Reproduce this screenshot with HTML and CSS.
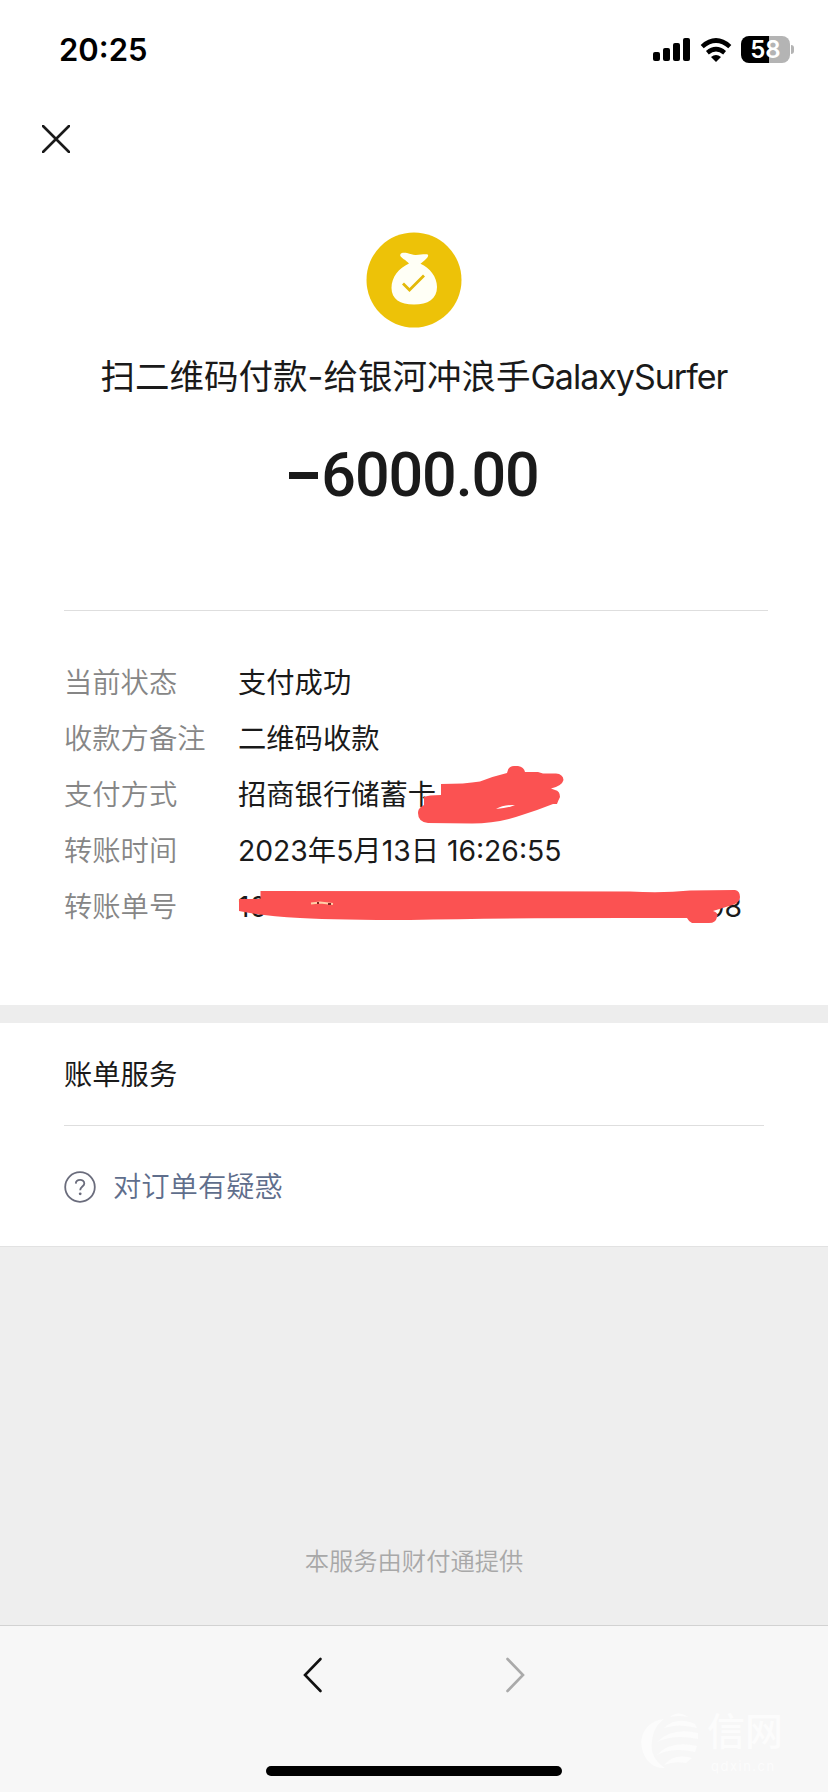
FILE: index.html
```html
<!DOCTYPE html>
<html lang="zh-CN">
<head>
    <meta charset="UTF-8">
    <title>账单详情</title>
    <link rel="stylesheet" href="styles.css">
</head>
<body>
<div class="page">
    <!--状态栏-->
    <div class="status">
        <span class="time">20:25</span>
        <div class="status_icons">
            <svg class="signal" width="38" height="24" viewBox="0 0 38 24">
                <rect x="0" y="14" width="7" height="9" rx="2"/>
                <rect x="10" y="10" width="7" height="13" rx="2"/>
                <rect x="20" y="5" width="7" height="18" rx="2"/>
                <rect x="30" y="0" width="7" height="23" rx="2"/>
            </svg>
            <svg class="wifi" width="32" height="24" viewBox="0 0 32 24">
                <path d="M2.2 8.6Q16-3.6 29.8 8.6" fill="none" stroke="#000" stroke-width="4.6"/>
                <path d="M7.4 14.7Q16 7.5 24.6 14.7" fill="none" stroke="#000" stroke-width="4.4"/>
                <path d="M11 19Q16 15.2 21 19L16 24Z"/>
            </svg>
            <div class="battery"><span>58</span></div>
            <i class="battery_cap"></i>
        </div>
    </div>
    <div class="nav">
        <svg width="28" height="28" viewBox="0 0 28 28">
            <path d="M1 1L27 27M27 1L1 27" stroke="#1a1a1a" stroke-width="2.6" stroke-linecap="round"/>
        </svg>
    </div>

    <!--收款信息-->
    <div class="summary">
        <svg class="logo" width="96" height="96" viewBox="0 0 96 96">
            <circle cx="48" cy="48" r="47.5" fill="#edc208"/>
            <path d="M43 31.5C40 28 35 26 34.2 23.5C34 20.5 38 20.5 41 21C45 21.8 47 23.3 50 23C54 22.7 58 22 61 22.3C63.5 23 61.5 26 59 28L54.5 31.8C64 36 71 45 71 55C71 67 62 72.5 48 72.5C34 72.5 25.5 67 25.5 56C25.5 45 33 36 43 31.5Z" fill="#fffff6"/>
            <path d="M37 51.5L43.5 58L58 43.5" fill="none" stroke="#e3b909" stroke-width="2.8"/>
        </svg>
        <div class="title">扫二维码付款-给银河冲浪手<span>GalaxySurfer</span></div>
        <div class="amount"><i class="minus"></i>6000.00</div>
    </div>

    <!--账单明细-->
    <div class="details">
        <div class="row"><span class="label">当前状态</span><span class="value">支付成功</span></div>
        <div class="row"><span class="label">收款方备注</span><span class="value">二维码收款</span></div>
        <div class="row">
            <span class="label">支付方式</span><span class="value">招商银行储蓄卡</span>
            <svg class="scribble card_mask" width="150" height="62" viewBox="416 764 150 62">
                <path d="M418 813Q418 809 421 807L424 805L424 797Q428 795 441 795L441 784Q465 784 480 781.5Q494 776 507 773Q508 766 514 766L518 766Q524 767 525 772L538 772L543 773.5L556 773.5Q563 774 563.5 780Q562 786 551 788.5L555 790Q560 791 560 797Q558 801 557 804L553 804Q538 810 522 815Q498 823.5 472 823.5L428 823Q418 822 418 813Z" fill="#fb5252"/>
                <path d="M496 809Q503 804.5 515 805Q508 808 496 809Z" fill="#fff"/>
            </svg>
        </div>
        <div class="row"><span class="label">转账时间</span><span class="value date">2023年5月13日 16:26:55</span></div>
        <div class="row">
            <span class="label">转账单号</span><span class="value number"><span>10</span><span>98</span></span>
            <svg class="scribble number_mask" width="504" height="36" viewBox="238 889 504 36">
                <path d="M239 899L260.5 899L260.5 891L630 891.5Q662 893.5 690 890.5L735 890Q740 891 740 897Q740 902 734 904.5L713 911Q719 913 717 917Q716 923 709 923L692 923Q689 922 687 918L620 918Q500 918 410 920Q340 920 300 918Q262 916 239 911Z" fill="#fb5252"/>
                <path d="M311 903.5L320 902.5L333 904" fill="none" stroke="#ffcfa8" stroke-width="2"/>
                <path d="M317 903H319M328 904H331" stroke="#7c2925" stroke-width="2"/>
            </svg>
        </div>
    </div>

    <!--账单服务-->
    <div class="service">
        <div class="service_title">账单服务</div>
        <div class="service_item">
            <svg width="32" height="32" viewBox="0 0 32 32">
                <circle cx="16" cy="16" r="14.8" fill="none" stroke="#6a6c7c" stroke-width="1.8"/>
                <path d="M11.8 12.6C12 7.7 20.3 7.7 20.3 12.4C20.3 15.4 16.2 15.7 16.2 19.2" fill="none" stroke="#6a6c7c" stroke-width="1.8"/>
                <circle cx="16.2" cy="22.8" r="1.4" fill="#6a6c7c"/>
            </svg>
            <span>对订单有疑惑</span>
        </div>
    </div>

    <div class="provider">本服务由财付通提供</div>

    <!--底部工具栏-->
    <div class="toolbar">
        <div class="arrows">
            <svg width="20" height="36" viewBox="0 0 20 36">
                <path d="M17.5 2L2 18L17.5 34" fill="none" stroke="#111" stroke-width="2.6" stroke-linecap="round"/>
            </svg>
            <svg width="20" height="36" viewBox="0 0 20 36">
                <path d="M2.5 2L18 18L2.5 34" fill="none" stroke="#aaa" stroke-width="2.6" stroke-linecap="round"/>
            </svg>
        </div>
        <div class="home_bar"></div>
        <div class="watermark">
            <svg width="60" height="58" viewBox="0 0 60 58">
                <path d="M24 7C6 9-1 24 2 37C5 50 15 57 25 56C16 50 10 42 12 29C13 19 17 12 24 7Z"/>
                <path d="M30 5Q38-2 48 5Q38 3 30 5ZM24 16Q36 4 55 12L57 16Q38 11 24 16ZM17 30Q32 15 58 21V27Q34 22 17 30ZM17 43Q30 28 57 34L55 40Q33 35 17 43ZM24 53Q34 41 52 46L46 51Q34 49 24 53Z"/>
            </svg>
            <div class="watermark_text"><b>信网</b><span>qdxin.cn</span></div>
        </div>
    </div>
</div>
</body>
</html>
```
FILE: styles.css
```css
*{
    margin: 0;
    padding: 0;
    box-sizing: border-box;
}
body{
    background: #eee;
    font-family: Inter, "Noto Sans CJK SC", sans-serif;
    color: #1a1a1a;
}
svg{
    display: block;
    flex: none;
}
.page{
    width: 828px;
    height: 1792px;
    display: flex;
    flex-direction: column;
    overflow: hidden;
}
/*状态栏*/
.status{
    height: 100px;
    padding: 0 34px 1px 59px;
    background: #fff;
    display: flex;
    justify-content: space-between;
    align-items: center;
    color: #000;
}
.time{
    font-size: 31px;
    font-weight: 600;
}
.status_icons{
    display: flex;
    align-items: center;
}
.signal{
    margin-right: 9px;
}
.wifi{
    margin-right: 9px;
}
.battery{
    width: 49px;
    height: 27px;
    border-radius: 8px;
    background: linear-gradient(90deg, #000 28px, #b4b4b4 28px);
    color: #fff;
    font-size: 24px;
    font-weight: 600;
    line-height: 27px;
    text-align: center;
}
.battery_cap{
    width: 3px;
    height: 9px;
    margin-left: 1px;
    border-radius: 0 4px 4px 0;
    background: #b4b4b4;
}
/*关闭按钮*/
.nav{
    height: 132px;
    padding: 25px 0 0 42px;
    background: #fff;
}
/*头像、标题、金额*/
.summary{
    height: 378px;
    background: #fff;
    display: flex;
    flex-direction: column;
    align-items: center;
}
.title{
    margin-top: 24px;
    font-size: 34.5px;
    line-height: 50px;
    white-space: nowrap;
}
.title span{
    font-size: 34px;
    letter-spacing: -1px;
}
.amount{
    margin-top: 38px;
    display: flex;
    align-items: center;
    font-family: Roboto, sans-serif;
    font-size: 61px;
    font-weight: 500;
    line-height: 70px;
    letter-spacing: -1.1px;
}
.minus{
    width: 29px;
    height: 7px;
    margin-right: 3px;
    background: #1a1a1a;
}
/*明细列表*/
.details{
    height: 395px;
    padding: 0 60px 0 64px;
    background: #fff;
    font-size: 28.3px;
}
.details::before{
    content: "";
    display: block;
    height: 1px;
    margin-bottom: 44px;
    background: #dedede;
}
.row{
    height: 56px;
    line-height: 56px;
    display: flex;
    position: relative;
    white-space: nowrap;
}
.label{
    width: 174px;
    color: #868686;
    font-weight: 350;
}
.number{
    width: 504px;
    display: flex;
    justify-content: space-between;
}
/*涂抹遮挡*/
.scribble{
    position: absolute;
}
.card_mask{
    left: 352px;
    top: -3px;
}
.number_mask{
    left: 174px;
    top: 10px;
}
/*账单服务*/
.service{
    height: 241px;
    padding: 0 64px;
    border-top: 18px solid #ededed;
    background: #fff;
    font-size: 28.3px;
}
.service_title{
    height: 103px;
    line-height: 104px;
    border-bottom: 1px solid #dedede;
}
.service_item{
    height: 120px;
    padding-top: 2px;
    display: flex;
    align-items: center;
    color: #5f6e8c;
    font-weight: 350;
}
.service_item span{
    margin-top: -5px;
    margin-left: 17px;
}
.provider{
    height: 379px;
    padding-top: 296px;
    border-top: 1px solid #e2e2e2;
    font-size: 24.3px;
    line-height: 36px;
    font-weight: 350;
    color: #a8a8a8;
    text-align: center;
}
/*底部工具栏*/
.toolbar{
    flex: 1;
    border-top: 1px solid #d2d2d2;
    background: #f7f7f7;
    position: relative;
}
.arrows{
    padding-top: 31px;
    display: flex;
    justify-content: center;
    gap: 182px;
}
.home_bar{
    width: 296px;
    height: 10px;
    margin: 73px auto 0;
    border-radius: 5px;
    background: #000;
}
/*水印*/
.watermark{
    position: absolute;
    left: 640px;
    top: 86px;
    display: flex;
    gap: 7px;
    color: #fcfcfc;
    fill: #fcfcfc;
}
.watermark_text{
    margin-top: -9px;
    display: flex;
    flex-direction: column;
}
.watermark_text b{
    font-size: 38px;
    line-height: 56px;
    font-weight: 500;
}
.watermark_text span{
    margin-left: 4px;
    font-size: 13px;
    line-height: 15px;
    letter-spacing: 1.5px;
}
```
